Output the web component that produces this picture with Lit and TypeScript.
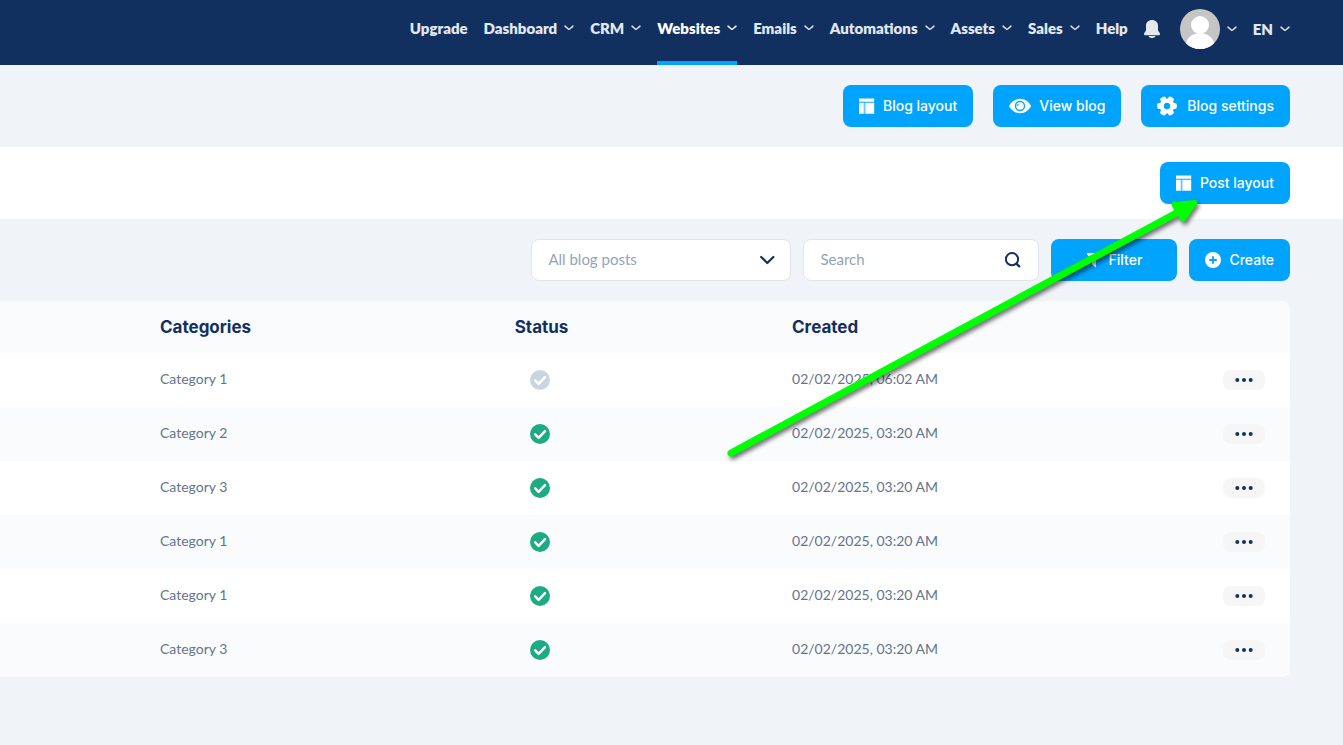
import { LitElement, html, css, svg, nothing } from "lit";
import { customElement } from "lit/decorators.js";
import { classMap } from "lit/directives/class-map.js";

interface NavItem {
  label: string;
  menu: boolean;
  active?: boolean;
}

const NAV: NavItem[] = [
  { label: "Upgrade", menu: false },
  { label: "Dashboard", menu: true },
  { label: "CRM", menu: true },
  { label: "Websites", menu: true, active: true },
  { label: "Emails", menu: true },
  { label: "Automations", menu: true },
  { label: "Assets", menu: true },
  { label: "Sales", menu: true },
  { label: "Help", menu: false },
];

const POSTS = [
  { category: "Category 1", published: false, created: "02/02/2025, 06:02 AM" },
  { category: "Category 2", published: true, created: "02/02/2025, 03:20 AM" },
  { category: "Category 3", published: true, created: "02/02/2025, 03:20 AM" },
  { category: "Category 1", published: true, created: "02/02/2025, 03:20 AM" },
  { category: "Category 1", published: true, created: "02/02/2025, 03:20 AM" },
  { category: "Category 3", published: true, created: "02/02/2025, 03:20 AM" },
];

const caret = html`<svg class="caret" width="10" height="6" viewBox="0 0 10 6" aria-hidden="true">
  <path d="M1 1.100 L4.300 4 Q5 4.600 5.700 4 L9 1.100" fill="none" stroke="currentColor" stroke-width="1.400" stroke-linecap="round" />
</svg>`;

const layoutIcon = html`<svg width="16" height="16" viewBox="0 0 16 16" aria-hidden="true">
  <path d="M0 0.400h15.200v3.400h-15.200z M0 4.700h4.800v11h-4.800z M6.400 4.700h8.800v11h-8.800z" fill="#fff" />
  <path d="M5.200 4.700h1.200v11h-1.200z" fill="#fff" opacity="0.5" />
</svg>`;

const eyeIcon = html`<svg width="22" height="16" viewBox="0 0 22 16" aria-hidden="true">
  <path d="M11 0.800C6 .8 2 3.800 0 8c2 4.200 6 7.200 11 7.200S20 12.200 22 8C20 3.800 16 .8 11 .8z" fill="#fff" />
  <circle cx="11" cy="8" r="4.500" fill="none" stroke="#00a4fd" stroke-width="1.300" />
  <path d="M9.800 6.200a1.600 1.600 0 0 0-1.500 2" fill="none" stroke="#00a4fd" stroke-width="1" />
</svg>`;

const gearIcon = html`<svg width="22" height="20" viewBox="0 0 22 20" aria-hidden="true">
  <g fill="#fff">
    ${[0, 60, 120, 180, 240, 300].map(
      (a) => svg`<rect x="7" y="0.100" width="6" height="6.500" rx="2.200" transform=${`rotate(${a + 30} 10 10)`} />`
    )}
  </g>
  <circle cx="10" cy="10" r="5.400" fill="none" stroke="#fff" stroke-width="4.200" />
</svg>`;

const filterIcon = html`<svg width="14" height="16" viewBox="0 0 14 16" aria-hidden="true">
  <path d="M0 1h13v1.600L9 7.400v8L5 12.600V7.400L0 2.600z" fill="#fff" />
</svg>`;

const createIcon = html`<svg width="16" height="16" viewBox="0 0 16 16" aria-hidden="true">
  <circle cx="8" cy="8" r="8" fill="#fff" />
  <path d="M8 4.200v7.600M4.200 8h7.600" stroke="#00a4fd" stroke-width="1.800" />
</svg>`;

@customElement("app-root")
export class AppRoot extends LitElement {
  static styles = css`
    :host {
      display: block;
      position: relative;
      min-height: 100vh;
      background: #f0f3f8;
      font-family: Lato, "Open Sans", sans-serif;
      font-size: 14px;
      color: #64748b;
      overflow: hidden;
    }
    * { box-sizing: border-box; }
    svg { display: block; flex: none; }
    button, input, select { font: inherit; }

    .topbar {
      display: flex;
      justify-content: flex-end;
      height: 65px;
      padding-right: 53px;
      background: #12305f;
      font-size: 15px;
      font-weight: 800;
    }
    .nav {
      display: flex;
      gap: 16px;
    }
    .link {
      display: flex;
      align-items: center;
      gap: 7px;
      padding-bottom: 5px;
      border: 0;
      border-bottom: 4px solid transparent;
      color: #e2e8f0;
      text-decoration: none;
      white-space: nowrap;
    }
    .active {
      border-color: #00a4fd;
      color: #fff;
    }
    .icon-button {
      display: flex;
      align-items: center;
      gap: 7px;
      padding: 0 0 8px;
      border: 0;
      background: none;
      color: #e2e8f0;
    }
    .avatar { margin-left: 4px; }

    .actions {
      display: flex;
      justify-content: flex-end;
      gap: 20px;
      padding: 20px 53px 20px 0;
    }
    .post-bar {
      display: flex;
      justify-content: flex-end;
      padding: 15px 53px 15px 0;
      background: #fff;
    }
    .button {
      display: flex;
      align-items: center;
      justify-content: center;
      gap: 8px;
      height: 42px;
      padding: 0 16px;
      border: 0;
      border-radius: 8px;
      background: #00a4fd;
      color: #fff;
      font: 500 14px/20px Inter, Roboto, sans-serif;
      white-space: nowrap;
    }
    .filter { min-width: 126px; }

    .toolbar {
      display: flex;
      justify-content: flex-end;
      gap: 12px;
      padding: 20px 53px 20px 0;
    }
    .field {
      display: grid;
      grid-template-columns: 1fr auto;
      align-items: center;
      height: 42px;
      border: 1px solid #dfe5ea;
      border-radius: 8px;
      background: #fff;
    }
    .field-select { width: 260px; }
    .field-search { width: 236px; }
    .control {
      grid-area: 1 / 1 / 2 / 3;
      width: 100%;
      height: 40px;
      padding: 0 48px 2px 16px;
      border: 0;
      border-radius: 8px;
      outline: 0;
      background: transparent;
      color: #94a3b8;
      font-size: 15px;
      line-height: 20px;
      appearance: none;
    }
    .control::placeholder { color: #94a3b8; opacity: 1; }
    .field-icon {
      grid-area: 1 / 2 / 2 / 3;
      margin-right: 15px;
      pointer-events: none;
    }

    .table-wrap { padding-right: 53px; }
    .table {
      width: 100%;
      border-collapse: separate;
      border-spacing: 0;
      border-radius: 0 8px 8px 0;
      overflow: hidden;
      table-layout: fixed;
    }
    .col-category { width: 39.9%; }
    .col-status { width: 21.5%; }
    .col-menu { width: 16%; }
    .head {
      height: 52px;
      padding: 0;
      background: #fafbfd;
      color: #12305f;
      font: 700 17px/24px Inter, Roboto, sans-serif;
      text-align: left;
    }
    .cell {
      height: 54px;
      padding: 0;
      background: #fff;
    }
    .text { padding-bottom: 4px; }
    .row:nth-child(even) .cell { background: #fafbfd; }
    .lead { padding-left: 160px; }
    .status { margin-left: 15px; }
    .menu { padding-right: 25px; }
    .dots {
      display: flex;
      align-items: center;
      justify-content: center;
      width: 42px;
      height: 20px;
      margin-left: auto;
      padding: 0;
      border: 0;
      border-radius: 8px;
      background: #f6f6f6;
    }
    .pointer {
      position: absolute;
      top: 194px;
      right: 135px;
      pointer-events: none;
      filter: drop-shadow(2px 3px 2px rgba(0, 0, 0, 0.55));
    }
  `;

  render() {
    return html`
      <header class="topbar">
        <nav class="nav">
          ${NAV.map(
            (item) => html`<a href="#" class=${classMap({ link: true, active: !!item.active })}>
              ${item.label}${item.menu ? caret : nothing}
            </a>`
          )}
          <button class="icon-button" aria-label="Notifications">
            <svg width="16" height="18" viewBox="0 0 16 18" aria-hidden="true">
              <path d="M8 0C4.600 0 2 2.300 2 5.600V10c0 1.400-2 2.600-2 4 0 .8.600 1.300 1.400 1.300h13.200c.8 0 1.400-.5 1.400-1.300 0-1.400-2-2.600-2-4V5.600C14 2.300 11.400 0 8 0z M4.500 16h7c-.3 1.200-1.600 2-3.500 2s-3.200-.8-3.500-2z" fill="#e5e9ee" />
            </svg>
          </button>
          <button class="icon-button avatar" aria-label="Account">
            <svg width="40" height="40" viewBox="0 0 40 40" aria-hidden="true">
              <defs><clipPath id="round"><circle cx="20" cy="20" r="20" /></clipPath></defs>
              <g clip-path="url(#round)">
                <rect width="40" height="40" fill="#c5c5c5" />
                <ellipse cx="20" cy="36" rx="14" ry="12" fill="#fff" />
                <circle cx="20" cy="16" r="9" fill="#fff" />
              </g>
            </svg>
            ${caret}
          </button>
          <button class="icon-button">EN ${caret}</button>
        </nav>
      </header>

      <div class="actions">
        <button class="button">${layoutIcon}Blog layout</button>
        <button class="button">${eyeIcon}View blog</button>
        <button class="button">${gearIcon}Blog settings</button>
      </div>

      <div class="post-bar">
        <button class="button">${layoutIcon}Post layout</button>
      </div>

      <div class="toolbar">
        <div class="field field-select">
          <select class="control" aria-label="Posts">
            <option>All blog posts</option>
          </select>
          <svg class="field-icon" width="16" height="10" viewBox="0 0 16 10" aria-hidden="true">
            <path d="M2.200 2L8.300 8l6.100-6" fill="none" stroke="#12305f" stroke-width="2.200" stroke-linecap="round" stroke-linejoin="round" />
          </svg>
        </div>
        <div class="field field-search">
          <input class="control" aria-label="Search" type="text" placeholder="Search" />
          <svg class="field-icon" width="19" height="18" viewBox="0 0 19 18" aria-hidden="true">
            <circle cx="8" cy="8.200" r="6.100" fill="none" stroke="#12305f" stroke-width="2" />
            <path d="M12.400 12.600l2.800 2.800" stroke="#12305f" stroke-width="2.200" stroke-linecap="round" />
          </svg>
        </div>
        <button class="button filter">${filterIcon}Filter</button>
        <button class="button">${createIcon}Create</button>
      </div>

      <div class="table-wrap">
        <table class="table">
          <colgroup>
            <col class="col-category" />
            <col class="col-status" />
            <col />
            <col class="col-menu" />
          </colgroup>
          <thead>
            <tr>
              <th class="head lead">Categories</th>
              <th class="head">Status</th>
              <th class="head">Created</th>
              <th class="head"></th>
            </tr>
          </thead>
          <tbody>
            ${POSTS.map(
              (post) => html`<tr class="row">
                <td class="cell text lead">${post.category}</td>
                <td class="cell">
                  <svg class="status" width="20" height="20" viewBox="0 0 20 20" role="img" aria-label=${post.published ? "Published" : "Draft"}>
                    <circle cx="10" cy="10" r="10" fill=${post.published ? "#1cab83" : "#cbd5e1"} />
                    <path d="M5.200 10.400l3.400 3.400 6.400-6.600" fill="none" stroke="#fff" stroke-width="2.500" stroke-linecap="round" stroke-linejoin="round" />
                  </svg>
                </td>
                <td class="cell text">${post.created}</td>
                <td class="cell menu">
                  <button class="dots" aria-label="Post actions">
                    <svg width="18" height="4" viewBox="0 0 18 4" aria-hidden="true">
                      <g fill="#12305f"><circle cx="2.300" cy="2" r="2" /><circle cx="9" cy="2" r="2" /><circle cx="15.700" cy="2" r="2" /></g>
                    </svg>
                  </button>
                </td>
              </tr>`
            )}
          </tbody>
        </table>
      </div>

      <svg class="pointer" width="488" height="270" viewBox="720 194 488 270" aria-hidden="true">
        <path d="M731 453L1182 210" stroke="#00ff00" stroke-width="7" stroke-linecap="round" />
        <path d="M1174 204.500L1195 202.500L1183 219.500z" fill="#00ff00" stroke="#00ff00" stroke-width="5" stroke-linejoin="round" />
      </svg>
    `;
  }
}
